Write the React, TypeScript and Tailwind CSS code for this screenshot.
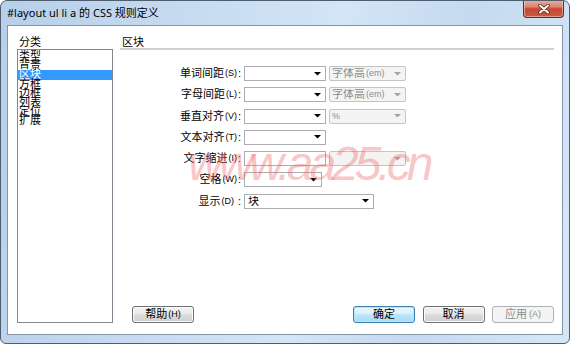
import React from 'react';

const cats = ['类型', '背景', '区块', '方框', '边框', '列表', '定位', '扩展'];

function Arrow({ disabled }: { disabled?: boolean }) {
  return (
    <svg width="7" height="4" viewBox="0 0 7 4" className="shrink-0">
      <path d="M0 0h7L3.5 3.6z" fill={disabled ? '#a3a3a3' : '#000'} />
    </svg>
  );
}

function Select({
  className,
  disabled,
  arrow = true,
  children,
}: {
  className: string;
  disabled?: boolean;
  arrow?: boolean;
  children?: React.ReactNode;
}) {
  return (
    <div
      className={`h-[15px] flex items-center pl-[2px] pr-[4px] border ${
        disabled ? 'border-[#c4c4c4] bg-[#f4f4f4] text-[#8c8c8c] rounded-[2px]' : 'border-[#abadb3] bg-white text-black'
      } ${className}`}
    >
      <div className="flex-1 flex items-center leading-none whitespace-nowrap overflow-hidden">{children}</div>
      {arrow && <Arrow disabled={disabled} />}
    </div>
  );
}

function Label({ text, k, spaced }: { text: string; k: string; spaced?: boolean }) {
  return (
    <div className="w-[121px] flex justify-end items-center leading-none whitespace-nowrap">
      <span>{text}</span>
      <span className="text-[9px] ml-[1px]">({k})</span>
      <span className={spaced ? 'ml-[4px]' : 'ml-[1px]'}>:</span>
    </div>
  );
}

function Em() {
  return (
    <>
      <span>字体高</span>
      <span className="text-[9px] ml-[1px]">(em)</span>
    </>
  );
}

function Btn({ children, primary, disabled }: { children: React.ReactNode; primary?: boolean; disabled?: boolean }) {
  const look = disabled
    ? 'border-[#adb2b5] bg-[#f4f4f4] text-[#8d8d8d]'
    : primary
    ? 'border-[#3c7fb1] bg-[linear-gradient(180deg,#eaf6fd_0%,#d9f0fc_45%,#bee6fd_50%,#a7d9f5_100%)] text-black shadow-[inset_0_0_0_1px_#b9e4f9]'
    : 'border-[#707070] bg-[linear-gradient(180deg,#f2f2f2_0%,#ebebeb_45%,#dddddd_50%,#cfcfcf_100%)] text-black shadow-[inset_0_0_0_1px_#fcfcfc]';
  return (
    <div className={`w-[62px] h-[17px] border rounded-[3px] flex items-center justify-center leading-none whitespace-nowrap ${look}`}>
      {children}
    </div>
  );
}

export default function App() {
  return (
    <div className="w-[570px] h-[344px] bg-white font-['Liberation_Sans','Noto_Sans_CJK_SC',sans-serif] text-[11px] text-black">
      <div className="relative w-full h-full rounded-t-[7px] rounded-b-[6px] border border-[#4f5d6e] bg-[linear-gradient(100deg,#b7cfe9_0%,#c6dbf1_30%,#d3e5f7_55%,#c5daf0_75%,#d6e7f8_100%)] flex flex-col overflow-hidden">
        {/* title bar */}
        <div className="h-[24px] flex items-start shrink-0">
          <div className="pl-[6px] pt-[6px] text-[11px] leading-none font-['Noto_Sans','Noto_Sans_CJK_SC',sans-serif] text-black">
            #layout ul li a 的 CSS 规则定义
          </div>
          <div className="ml-auto mr-[5px] -mt-px w-[41px] h-[18px] border border-t-0 border-[#6b2a20] rounded-b-[4px] bg-[linear-gradient(180deg,#eab0a2_0%,#dc8473_40%,#c8462f_52%,#c45b3f_100%)] flex items-center justify-center shadow-[inset_0_0_0_1px_rgba(255,220,210,0.5)]">
            <svg width="12" height="10" viewBox="0 0 12 10">
              <path d="M2 1.5l8 7M10 1.5l-8 7" stroke="#5a1f16" strokeWidth="3.6" strokeLinecap="round" />
              <path d="M2 1.5l8 7M10 1.5l-8 7" stroke="#ffffff" strokeWidth="2" strokeLinecap="round" />
            </svg>
          </div>
        </div>

        {/* client */}
        <div className="mx-[6px] mb-[8px] flex-1 border border-[#8595a8] bg-white flex pt-[10px] pb-[11px] pl-[9px] pr-[8px] gap-[7px]">
          {/* categories */}
          <div className="w-[96px] flex flex-col">
            <div className="h-[12px] leading-[12px] pl-[2px] mb-[1px]">分类</div>
            <div className="flex-1 border border-[#828790] pt-[2px]">
              {cats.map((c, i) => (
                <div
                  key={c}
                  className={`h-[9.2px] leading-[9.2px] pl-[1px] overflow-visible whitespace-nowrap ${
                    i === 2 ? 'bg-[#3399ff] text-white' : ''
                  }`}
                >
                  {c}
                </div>
              ))}
            </div>
          </div>

          {/* panel */}
          <div className="flex-1 flex flex-col">
            <div className="h-[12px] leading-[12px] pl-[2px]">区块</div>
            <div className="h-[2px] bg-[#d2d2d2]" />

            <div className="mt-[16px] flex flex-col gap-[6.3px]">
              <div className="flex items-center gap-[3px]">
                <Label text="单词间距" k="S" />
                <Select className="w-[82px]" />
                <Select className="w-[77px]" disabled>
                  <Em />
                </Select>
              </div>
              <div className="flex items-center gap-[3px]">
                <Label text="字母间距" k="L" />
                <Select className="w-[82px]" />
                <Select className="w-[77px]" disabled>
                  <Em />
                </Select>
              </div>
              <div className="flex items-center gap-[3px]">
                <Label text="垂直对齐" k="V" />
                <Select className="w-[82px]" />
                <Select className="w-[77px]" disabled>
                  <span className="text-[9px]">%</span>
                </Select>
              </div>
              <div className="flex items-center gap-[3px]">
                <Label text="文本对齐" k="T" />
                <Select className="w-[82px]" />
              </div>
              <div className="flex items-center gap-[3px]">
                <Label text="文字缩进" k="I" />
                <Select className="w-[82px]" arrow={false} />
                <Select className="w-[77px]" disabled />
              </div>
              <div className="flex items-center gap-[3px]">
                <Label text="空格" k="W" />
                <Select className="w-[78px]" />
              </div>
              <div className="flex items-center gap-[3px]">
                <Label text="显示" k="D" spaced />
                <Select className="w-[130px]">
                  <span className="pl-[1px]">块</span>
                </Select>
              </div>
            </div>

            <div className="mt-auto flex items-center">
              <div className="ml-[12px]">
                <Btn>
                  帮助<span className="text-[9px] ml-[1px]">(H)</span>
                </Btn>
              </div>
              <div className="ml-auto flex gap-[7.5px]">
                <Btn primary>确定</Btn>
                <Btn>取消</Btn>
                <Btn disabled>
                  应用<span className="text-[9px] ml-[2px]">(A)</span>
                </Btn>
              </div>
            </div>
          </div>
        </div>

        {/* watermark */}
        <div className="absolute left-[187px] top-[139px] text-[48px] italic tracking-[-4px] leading-none text-[#f06a6a]/40 pointer-events-none whitespace-nowrap">
          www.aa25.cn
        </div>
      </div>
    </div>
  );
}
